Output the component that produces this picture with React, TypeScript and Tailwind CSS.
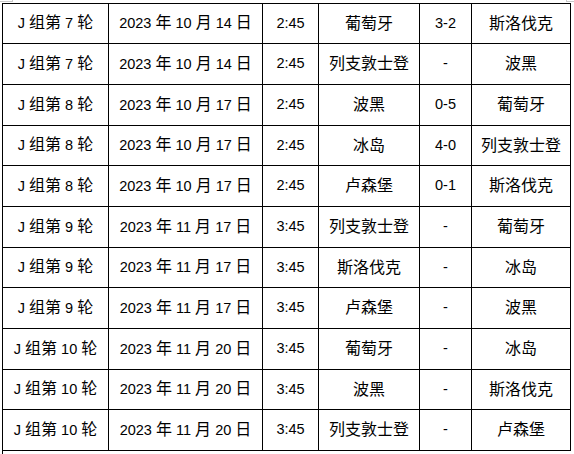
import React from "react";

type Row = [string, string, string, string, string, string];

const rows: Row[] = [
  ["J 组第 7 轮", "2023 年 10 月 14 日", "2:45", "葡萄牙", "3-2", "斯洛伐克"],
  ["J 组第 7 轮", "2023 年 10 月 14 日", "2:45", "列支敦士登", "-", "波黑"],
  ["J 组第 8 轮", "2023 年 10 月 17 日", "2:45", "波黑", "0-5", "葡萄牙"],
  ["J 组第 8 轮", "2023 年 10 月 17 日", "2:45", "冰岛", "4-0", "列支敦士登"],
  ["J 组第 8 轮", "2023 年 10 月 17 日", "2:45", "卢森堡", "0-1", "斯洛伐克"],
  ["J 组第 9 轮", "2023 年 11 月 17 日", "3:45", "列支敦士登", "-", "葡萄牙"],
  ["J 组第 9 轮", "2023 年 11 月 17 日", "3:45", "斯洛伐克", "-", "冰岛"],
  ["J 组第 9 轮", "2023 年 11 月 17 日", "3:45", "卢森堡", "-", "波黑"],
  ["J 组第 10 轮", "2023 年 11 月 20 日", "3:45", "葡萄牙", "-", "冰岛"],
  ["J 组第 10 轮", "2023 年 11 月 20 日", "3:45", "波黑", "-", "斯洛伐克"],
  ["J 组第 10 轮", "2023 年 11 月 20 日", "3:45", "列支敦士登", "-", "卢森堡"],
];

const heights = [
  "h-[40px]",
  "h-[41px]",
  "h-[41px]",
  "h-[40px]",
  "h-[41px]",
  "h-[41px]",
  "h-[40px]",
  "h-[41px]",
  "h-[41px]",
  "h-[40px]",
  "h-[41px]",
];

const widths = ["w-[106px]", "w-[154px]", "w-[56px]", "w-[101px]", "w-[52px]", "w-[99px]"];

function Mixed({ text }: { text: string }) {
  const parts = text.split(/([\u4e00-\u9fff]+)/).filter((p) => p.length > 0);
  return (
    <span className="whitespace-pre">
      {parts.map((p, i) =>
        /[\u4e00-\u9fff]/.test(p) ? (
          <span key={i} className="font-['Noto_Sans_CJK_SC',sans-serif] text-[16px]">
            {p}
          </span>
        ) : (
          <span key={i} className="font-['Liberation_Sans',sans-serif] text-[14.5px]">
            {p}
          </span>
        )
      )}
    </span>
  );
}

export default function App() {
  return (
    <div className="w-[574px] h-[454px] bg-white overflow-hidden text-black">
      <div className="flex h-[3px] justify-between">
        <div className="w-[13px] h-[2px] border-b border-r border-[#c8c8c8]" />
        <div className="w-[8px] h-[2px] border-b border-l border-[#c8c8c8]" />
      </div>
      <div className="ml-[2px] w-[569px] border-t border-l border-black">
        {rows.map((r, ri) => (
          <div key={ri} className={`flex ${heights[ri]}`}>
            {r.map((c, ci) => (
              <div
                key={ci}
                className={`${widths[ci]} shrink-0 border-r border-b border-black flex items-center justify-center pb-[3px] leading-none`}
              >
                <Mixed text={c} />
              </div>
            ))}
          </div>
        ))}
        <div className="h-[3px]" />
      </div>
    </div>
  );
}
